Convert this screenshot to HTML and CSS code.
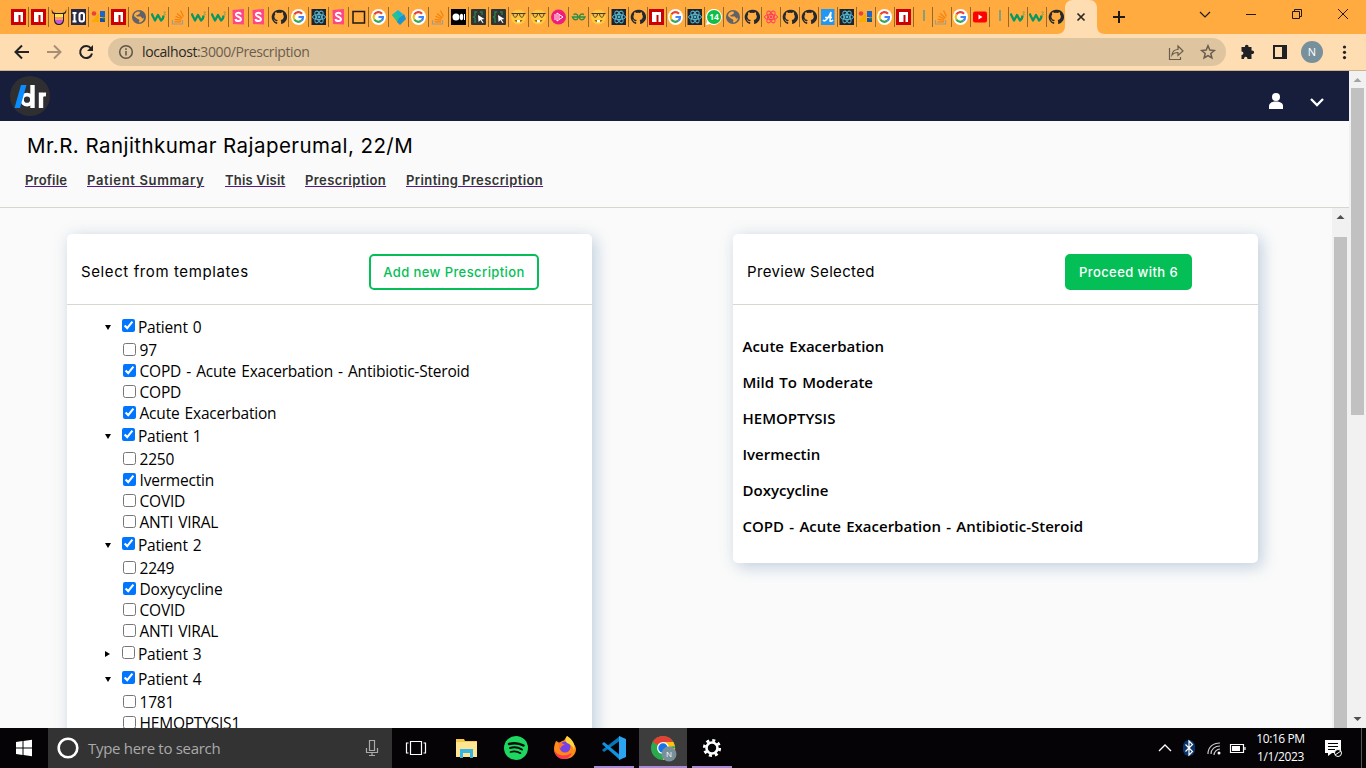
FILE: index.html
```
<!DOCTYPE html>
<html lang="en">
<head>
<meta charset="utf-8">
<title>Prescription</title>
<link rel="stylesheet" href="styles.css">
</head>
<body>
<svg class="defs" width="0" height="0">
  <symbol id="npm" viewBox="0 0 16 16"><path fill="#cb0000" d="M0 0h15v16H0z"/><path fill="#fff" d="M3 3h9v10H9.500V6H7.500v7H3z"/></symbol>
  <symbol id="devil" viewBox="0 0 16 16"><path fill="#222" d="M1 0c0 3 2 4 4 4h6c2 0 4-1 4-4 1 4-1 5-2 5v6c0 3-2 5-5 5s-5-2-5-5V5C2 5 0 4 1 0z"/><path fill="#ffe14d" d="M4 5h8v4H4z"/><path fill="#ff9860" d="M4 8h8v3H4z"/><path fill="#c85ad8" d="M4 11h8c0 2-2 4-4 4s-4-2-4-4z"/></symbol>
  <symbol id="io" viewBox="0 0 16 16"><rect width="15" height="16" fill="#292944"/><path fill="none" stroke="#fff" stroke-width="2" d="M1.500 4h4M3.500 4v9M1.500 12.500h4"/><rect x="8.500" y="4" width="4.500" height="8.500" rx="2" fill="none" stroke="#fff" stroke-width="2"/></symbol>
  <symbol id="dev" viewBox="0 0 16 16"><circle cx="3" cy="4.500" r="2.300" fill="#ea4335"/><path fill="#f9ab00" d="M0 13 8 4v9z"/><path fill="#1a66d0" d="M9 2h5v6H9z"/><path fill="#174ea6" d="M9 9h2l3 2v2H9z"/><path fill="#188038" d="M11 8.500h3V12z"/></symbol>
  <symbol id="globe" viewBox="0 0 16 16"><circle cx="8" cy="8" r="7" fill="#5f6368"/><path fill="#ffab40" d="M7 2.500c3 0 2 2 1 2.500-1 .5-1 1-2 1s-1 1 0 1.500h3c2 0 1 2 3 2l1-1c0 3-3 5-5 5 0-2 1-2 0-3l-2-1-3-2.500C3 4 5 3 7 2.500z"/></symbol>
  <symbol id="w3" viewBox="0 0 16 16"><path fill="none" stroke="#059862" stroke-width="2.300" stroke-linejoin="round" d="M.5 4.500 4 11.500 7 6l3 5.500c1.500-1 2.500-2.500 2.500-5"/><path fill="none" stroke="#7a9a4e" stroke-width=".8" d="M12.500 3h2l-1 1.500 1 1-2 .7"/></symbol>
  <symbol id="so" viewBox="0 0 16 16"><path fill="none" stroke="#a09c8c" stroke-width="1.200" d="M1.500 11v4h10v-4"/><path fill="none" stroke="#f4800d" stroke-width="1.200" d="M3.500 12.800h6.500M3.700 10.300l6.500.9M4.500 7.300l6 2.500M6 4.500l5.500 4.500M9.500 1.500l3 6"/></symbol>
  <symbol id="sb" viewBox="0 0 16 16"><path fill="#ff4785" d="m1.500 1 11.500-1v15.500l-11-.5z"/><path fill="none" stroke="#fff" stroke-width="2" d="M10 5.500C9 3 4.500 3.500 5 6c.5 2 5 1.500 5 4 0 2.500-5 3-5.500 0"/></symbol>
  <symbol id="gh" viewBox="0 0 16 16"><path fill="#24292f" d="M8 .7a7.300 7.300 0 0 0-2.400 14.200c.4 0 .6-.2.6-.4v-1.400c-2 .5-2.500-1-2.500-1-.3-.8-.8-1-.8-1-.7-.5 0-.5 0-.5.8 0 1.200.8 1.200.8.7 1.200 1.800.8 2.200.6 0-.5.200-.8.500-1C5 10.700 3.400 10 3.400 7.400c0-.8.300-1.400.8-2-.1-.3-.4-1.100.1-2 0 0 .6-.3 2 .7a7 7 0 0 1 3.600 0c1.400-1 2-.7 2-.7.4.9.1 1.700.1 2 .5.600.8 1.200.8 2 0 2.600-1.700 3.300-3.200 3.500.3.300.5.800.5 1.500v2.200c0 .2.200.5.600.4A7.300 7.300 0 0 0 8 .7z"/></symbol>
  <symbol id="goog" viewBox="0 0 16 16"><ellipse cx="7.500" cy="8" rx="7.500" ry="8" fill="#fff"/><g fill="none" stroke-width="2.200" transform="translate(-.7)"><path stroke="#ea4335" d="M4 5.500a4.700 4.700 0 0 1 7.700-.8"/><path stroke="#fbbc05" d="M4 5.500a5 5 0 0 0 0 5"/><path stroke="#34a853" d="M4 10.500a4.700 4.700 0 0 0 7 1.200"/><path stroke="#4285f4" d="M11 11.700c1.300-1 1.800-2.200 1.700-3.700H8.200"/></g></symbol>
  <symbol id="atom" viewBox="0 0 16 16"><g fill="none" stroke="currentColor"><ellipse cx="8" cy="8" rx="6.500" ry="2.600"/><ellipse cx="8" cy="8" rx="6.500" ry="2.600" transform="rotate(60 8 8)"/><ellipse cx="8" cy="8" rx="6.500" ry="2.600" transform="rotate(120 8 8)"/></g><circle cx="8" cy="8" r="1.400" fill="currentColor"/></symbol>
  <symbol id="react" viewBox="0 0 16 16"><rect x=".5" width="14.500" height="16" fill="#20232a"/><use href="#atom" color="#53b9d4"/></symbol>
  <symbol id="preact" viewBox="0 0 16 16"><use href="#atom" color="#ff3e5e"/></symbol>
  <symbol id="sq" viewBox="0 0 16 16"><path fill="none" stroke="#1d1a16" stroke-width="1.500" d="M2 2.500h11.500v11.500H2z"/></symbol>
  <symbol id="teal" viewBox="0 0 16 16"><path fill="#12b6d8" d="m1 6 6-5 5 4-5 6z"/><path fill="#22c58b" d="m1 6 4-3 6 8-4 3z"/><path fill="#1794d1" d="m8 9 5-4 2 5-6 6-3-3z"/></symbol>
  <symbol id="med" viewBox="0 0 16 16"><path d="M0 0h15v16H0z"/><circle cx="5" cy="8" r="3.500" fill="#fff"/><ellipse cx="10.500" cy="8" rx="1.700" ry="3.300" fill="#fff"/><path stroke="#fff" d="M13.500 5v6"/></symbol>
  <symbol id="cur" viewBox="0 0 16 16"><rect width="15" height="16" rx="1" fill="#333"/><path fill="none" stroke="#278449" stroke-width="1.300" d="M6 3H4v4L2.500 8 4 9v4h1M9 3h2v3"/><path fill="#fff" d="m7 6 6.500 4-3 .5 2 3-1 .5-2-3-2 2z"/></symbol>
  <symbol id="nerd" viewBox="0 0 16 16"><circle cx="7.500" cy="8" r="7.500" fill="#ffc83d"/><path fill="none" stroke="#3d3427" d="M.5 4.500h14"/><path fill="#f3b94a" stroke="#3d3427" stroke-width=".9" d="M2 4.500h4.500c0 5-4.500 5-4.500 0zM8.500 4.500H13c0 5-4.500 5-4.500 0z"/><path fill="#9b6518" d="M3.500 11h8c-1 3-7 3-8 0z"/><path fill="#fff" d="M6 11h3v2.500H6z"/></symbol>
  <symbol id="pink" viewBox="0 0 16 16"><circle cx="7.500" cy="8" r="7.500" fill="#f01e7a"/><path fill="none" stroke="#fff" d="M4 5v6M6 4v8l6-4zM8 6v4"/></symbol>
  <symbol id="gfg" viewBox="0 0 16 16"><path fill="none" stroke="#2f8d46" stroke-width="1.400" d="M2.500 5.500C5.500 4 7.200 6 7 8.500 6.500 11.500 3 11.800 1.500 8h12.500c-1.500 3.800-5 3.500-5.500.5C8.300 6 10 4 13 5.500"/></symbol>
  <symbol id="wa" viewBox="0 0 16 16"><path fill="#fff" d="M8 0a8 8 0 1 1-4 15l-4 1 1-4A8 8 0 0 1 8 0z"/><circle cx="8" cy="8" r="7" fill="#0cbf46"/></symbol>
  <symbol id="aa" viewBox="0 0 16 16"><path fill="#2196f3" d="M1 0h13.500v16H1z"/><path fill="none" stroke="#fff" stroke-width="1.500" d="M3 11c2 3 6-3 8-8l-1 9c1 1 2 0 3-1M5 8.500h7"/></symbol>
  <symbol id="tick" viewBox="0 0 16 16"><path stroke="#6a9c84" stroke-width="1.600" d="M9 1v11"/></symbol>
  <symbol id="yt" viewBox="0 0 16 16"><rect x="1" y="2.500" width="14" height="11" rx="2" fill="#f00"/><path fill="#fff" d="m6.500 5.500 4 2.500-4 2.500z"/></symbol>
</svg>

<header class="tabstrip">
  <div class="tabs">
    <i><svg><use href="#npm"/></svg></i><i><svg><use href="#npm"/></svg></i><i><svg><use href="#devil"/></svg></i><i><svg><use href="#io"/></svg></i><i><svg><use href="#dev"/></svg></i><i><svg><use href="#npm"/></svg></i><i><svg><use href="#globe"/></svg></i><i><svg><use href="#w3"/></svg></i><i><svg><use href="#so"/></svg></i><i><svg><use href="#w3"/></svg></i><i><svg><use href="#w3"/></svg></i><i><svg><use href="#sb"/></svg></i><i><svg><use href="#sb"/></svg></i><i><svg><use href="#gh"/></svg></i><i><svg><use href="#goog"/></svg></i><i><svg><use href="#react"/></svg></i><i><svg><use href="#sb"/></svg></i><i><svg><use href="#sq"/></svg></i><i><svg><use href="#goog"/></svg></i><i><svg><use href="#teal"/></svg></i><i><svg><use href="#goog"/></svg></i><i><svg><use href="#so"/></svg></i><i><svg><use href="#med"/></svg></i><i><svg><use href="#cur"/></svg></i><i><svg><use href="#cur"/></svg></i><i><svg><use href="#nerd"/></svg></i><i><svg><use href="#nerd"/></svg></i><i><svg><use href="#pink"/></svg></i><i><svg><use href="#gfg"/></svg></i><i><svg><use href="#nerd"/></svg></i><i><svg><use href="#react"/></svg></i>
  </div>
  <div class="tabs narrow">
    <i><svg><use href="#gh"/></svg></i><i><svg><use href="#npm"/></svg></i><i><svg><use href="#goog"/></svg></i><i><svg><use href="#react"/></svg></i><i><svg><use href="#wa"/><text x="8" y="11" text-anchor="middle" font-size="8.500" font-weight="700" fill="#fff">14</text></svg></i><i><svg><use href="#globe"/></svg></i><i><svg><use href="#gh"/></svg></i><i><svg><use href="#preact"/></svg></i><i><svg><use href="#gh"/></svg></i><i><svg><use href="#gh"/></svg></i><i><svg><use href="#aa"/></svg></i><i><svg><use href="#react"/></svg></i><i><svg><use href="#dev"/></svg></i><i><svg><use href="#goog"/></svg></i><i><svg><use href="#npm"/></svg></i><i><svg><use href="#tick"/></svg></i><i><svg><use href="#so"/></svg></i><i><svg><use href="#goog"/></svg></i><i><svg><use href="#yt"/></svg></i><i><svg><use href="#tick"/></svg></i><i><svg><use href="#w3"/></svg></i><i><svg><use href="#w3"/></svg></i><i class="last"><svg><use href="#gh"/></svg></i>
  </div>
  <svg class="active-tab" width="48" height="34"><path fill="#ffddb3" d="M0 34c5 0 8-3 8-8V8c0-5 3-8 8-8h16c5 0 8 3 8 8v18c0 5 3 8 8 8z"/><path stroke="#2b2723" stroke-width="1.700" d="m20.500 13.500 7 7m0-7-7 7"/></svg>
  <svg class="window-controls" width="261" height="34" fill="none" stroke="#1f1a12"><path stroke-width="2" d="M8 17h12M14 11v12"/><path stroke-width="1.200" d="m95 12 5 5 5-5"/><path d="M141 14.500h10M187.500 11.500h7v7h-7zM189.500 11v-1.500h7v7H195"/><path d="m233 9 10 10m0-10-10 10"/></svg>
</header>

<nav class="toolbar">
  <svg width="100" height="36" fill="none" stroke-width="2"><path stroke="#202124" d="M29 18H16m6-6.500L15.500 18l6.500 6.500"/><path stroke="#a78f75" d="M47 18h13m-6-6.500 6.500 6.500-6.500 6.500"/><path stroke="#202124" d="M91 14.500a6 6 0 1 0 1 5"/><path fill="#202124" d="M93 11v6h-6z"/></svg>
  <div class="address">
    <svg width="16" height="16" fill="none" stroke="#5c5449" stroke-width="1.500"><circle cx="8" cy="8" r="6.300"/><path d="M8 7v4.500M8 4.300V6"/></svg>
    <span class="url"><b>localhost</b>:3000/Prescription</span>
    <svg class="share" width="50" height="20" fill="none" stroke="#695d4e" stroke-width="1.200"><path d="M2.500 6v11.500h11V15M5 13c.5-4 3-5.500 6-5.500V4l5 5-5 4.500v-3c-3 0-4.500.5-6 2.500z"/><path stroke-width="1.500" d="m41 3.800 1.800 4.300 4.500.4-3.500 3 1.100 4.500-3.900-2.400-3.900 2.400 1.100-4.500-3.500-3 4.500-.4z"/></svg>
  </div>
  <svg class="actions" width="140" height="36"><path fill="#202124" d="M15.500 13h3.500c-.5-3 4-3 3.500 0h3v3.500c3.500-.5 3.500 4 0 3.500v5h-4c0-3-3.500-3-3.500 0h-2.500v-4c2.500 0 2.500-3.500 0-3.500z"/><path fill="none" stroke="#202124" stroke-width="2" d="M48 12h12v12H48z"/><path fill="#202124" d="M56 12h4v12h-4z"/><circle cx="86" cy="18" r="11" fill="#78909c"/><text x="86" y="22" text-anchor="middle" font-size="11" fill="#fff">N</text><g fill="#202124"><circle cx="118.500" cy="13" r="1.600"/><circle cx="118.500" cy="18.300" r="1.600"/><circle cx="118.500" cy="23.600" r="1.600"/></g></svg>
</nav>

<div class="viewport">
  <div class="page">
    <header class="appbar">
      <svg width="40" height="40"><ellipse cx="20" cy="20" rx="20" ry="20" fill="#2f2f31"/><g fill="none" stroke="#fff"><circle cx="17" cy="23.700" r="5" stroke-width="3.800"/><path stroke-width="4.400" d="M22.500 9v23M31 16.500V32"/><path stroke-width="3.800" d="M31 22c0-3 1.500-3.700 5-3.500"/></g><path fill="#0a8cff" d="M11 9h5.500L10 32H4.500z"/></svg>
      <svg class="user" width="70" height="30"><circle cx="13" cy="11" r="4" fill="#fff"/><path fill="#fff" d="M6 23v-3c0-3 3-4.500 7-4.500s7 1.500 7 4.500v3z"/><path fill="none" stroke="#fff" stroke-width="2.300" d="m48 13 6 6 6-6"/></svg>
    </header>
    <section class="patient">
      <h1>Mr.R. Ranjithkumar Rajaperumal, 22/M</h1>
      <div class="links"><a class="l1">Profile</a><a class="l2">Patient Summary</a><a class="l3">This Visit</a><a class="l4">Prescription</a><a class="l5">Printing Prescription</a></div>
    </section>
    <div class="scroller">
      <main class="cards">
        <section class="card templates">
          <div class="card-head"><h2 class="t1">Select from templates</h2><button class="outline">Add new Prescription</button></div>
          <div class="tree">
            <div class="parent"><em class="open"></em><input type="checkbox" checked><span>Patient 0</span></div>
            <label><input type="checkbox"><span>97</span></label>
            <label><input type="checkbox" checked><span>COPD - Acute Exacerbation - Antibiotic-Steroid</span></label>
            <label><input type="checkbox"><span>COPD</span></label>
            <label><input type="checkbox" checked><span>Acute Exacerbation</span></label>
            <div class="parent"><em class="open"></em><input type="checkbox" checked><span>Patient 1</span></div>
            <label><input type="checkbox"><span>2250</span></label>
            <label><input type="checkbox" checked><span>Ivermectin</span></label>
            <label><input type="checkbox"><span>COVID</span></label>
            <label><input type="checkbox"><span>ANTI VIRAL</span></label>
            <div class="parent"><em class="open"></em><input type="checkbox" checked><span>Patient 2</span></div>
            <label><input type="checkbox"><span>2249</span></label>
            <label><input type="checkbox" checked><span>Doxycycline</span></label>
            <label><input type="checkbox"><span>COVID</span></label>
            <label><input type="checkbox"><span>ANTI VIRAL</span></label>
            <div class="parent"><em></em><input type="checkbox"><span>Patient 3</span></div>
            <div class="parent"><em class="open"></em><input type="checkbox" checked><span>Patient 4</span></div>
            <label><input type="checkbox"><span>1781</span></label>
            <label><input type="checkbox"><span>HEMOPTYSIS1</span></label>
          </div>
        </section>
        <section class="card">
          <div class="card-head"><h2 class="t2">Preview Selected</h2><button class="solid">Proceed with 6</button></div>
          <ul class="preview">
            <li>Acute Exacerbation</li><li>Mild To Moderate</li><li>HEMOPTYSIS</li><li>Ivermectin</li><li>Doxycycline</li><li>COPD - Acute Exacerbation - Antibiotic-Steroid</li>
          </ul>
        </section>
      </main>
      <div class="bar inner"><svg width="17" height="17"><path fill="#505050" d="m4.500 11 4-4 4 4z"/></svg><div class="thumb"></div></div>
    </div>
  </div>
  <div class="bar outer"><svg width="17" height="17"><path fill="#a3a3a3" d="m4.500 11 4-4 4 4z"/></svg><div class="thumb"></div><svg width="17" height="17"><path fill="#505050" d="m4.500 6 4 4 4-4z"/></svg></div>
</div>

<footer class="taskbar">
  <svg width="48" height="40"><path fill="#fff" d="m16 14 6.500-1v6.500H16zM23.500 13l8.500-1.200v7.700h-8.500zM16 20.500h6.500V27L16 26zM23.500 20.500H32v7.700L23.500 27z"/></svg>
  <div class="search">
    <svg width="22" height="22"><circle cx="11" cy="11" r="9.300" fill="none" stroke="#fff" stroke-width="2.600"/></svg>
    <span>Type here to search</span>
    <svg width="16" height="20" fill="none" stroke="#aaa" stroke-width="1.200"><path d="M5.500 2.500h5v10h-5zM2.500 10v4.500h11V10M8 14.500v3M5 17.500h6"/></svg>
  </div>
  <svg class="apps" width="348" height="40">
    <g fill="none" stroke="#fff" stroke-width="1.200"><path d="M18.500 13.500h11v13h-11zM16.500 15h-2v10h2M31.500 15h2v10h-2"/></g>
    <path fill="#f5c84c" d="M64 11h8l1 2h12v3H64z"/><path fill="#ffe590" d="M64 14h21v15H64z"/><path fill="#39b3e6" d="M68 21h13v9h-3v-5h-7v5h-3z"/>
    <circle cx="124" cy="20" r="12" fill="#1ed760"/><g fill="none" stroke="#090909" stroke-linecap="round"><path stroke-width="2.500" d="M117 16c5-1.500 10-1 14.500 1.500"/><path stroke-width="2" d="M118 20c4-1.200 8-.8 12 1.500"/><path stroke-width="1.700" d="M118.500 24c3.500-1 7-.5 10 1.200"/></g>
    <path fill="#ff8a16" d="M164 13c1 0 2 1 3 2l3-2c2 0 3-2 5-5 2 2 3 3 4 6 2 1 5 4 5 7 0 6-5 10-11 10s-11-4-11-10c0-3 1-6 2-8z"/><path fill="#ff3750" d="M162 20c1 7 9 10 18 5-2 4-5 6-9 6-5 0-9-5-9-11z"/><circle cx="173" cy="19" r="5.500" fill="#7542e5"/><path fill="#ffd83d" d="M175 8c5 3 9 8 7 14-1-4-4-6-7-7-2-2-2-4 0-7z"/><path fill="#ff7139" d="M166 15c2-1 4 0 7 2-3 0-4 2-5 4z"/>
    <path fill="#0877b9" d="m228 8-18 14 2 2 17-12z"/><path fill="#1094df" d="m210 16 2-2 17 14-1 4z"/><path fill="#2ba5ef" d="m227 8 7 3v18l-7 3z"/>
    <rect x="247" width="48" height="40" fill="#3d3d3e"/>
    <circle cx="271" cy="20" r="12" fill="#2ca94f"/><path fill="#e44134" d="M271 20 260.600 14a12 12 0 0 1 20.800 0z"/><path fill="#fbc116" d="M271 20h12a12 12 0 0 0-1.600-6H271zM271 20l12-2a12 12 0 0 1-12 14z"/><circle cx="271" cy="20" r="6" fill="#fff"/><circle cx="271" cy="20" r="4.700" fill="#1a73e8"/><circle cx="277" cy="26" r="7.500" fill="#78909c"/><text x="277" y="29" text-anchor="middle" font-size="8" fill="#fff">N</text>
    <circle cx="320" cy="20" r="5.500" fill="none" stroke="#fff" stroke-width="2.600"/><circle cx="320" cy="20" r="7.700" fill="none" stroke="#fff" stroke-width="2.800" stroke-dasharray="3 3.050"/>
    <path fill="#a98ad8" d="M202 38h40v2h-40zM247 38h48v2h-48zM300 38h40v2h-40z"/>
  </svg>
  <svg class="tray" width="100" height="40" fill="none" stroke="#fff"><path stroke-width="1.300" d="m9 23 6-6 6 6"/><rect x="33" y="12" width="12" height="16" rx="6" fill="#09336b" stroke="none"/><path stroke-width="1.200" d="m35.500 16.500 7 7L39 27V13l3.500 3.500-7 7"/><g stroke="#ccc" stroke-width="1.200"><path d="M58 26c0-7 5-11 12-11M61 26c0-5 4-8 9-8M64 27c0-3 3-6 6-6"/></g><circle cx="69" cy="25" r="1.500" fill="#fff" stroke="none"/><path stroke-width="1.200" d="M80.500 16.500h13v8h-13zM95 19v3"/><path fill="#fff" stroke="none" d="M82 18h8v5h-8z"/></svg>
  <div class="clock"><span>10:16 PM</span><span>1/1/2023</span></div>
  <svg class="note" width="56" height="40"><path fill="#fff" d="M15 12h16v13h-9l-4 3v-3h-3z"/><path fill="none" stroke="#000" stroke-width="1.200" d="M18 15.500h10M18 18.500h10M18 21.500h7"/><circle cx="28" cy="25" r="3.500" fill="#000" stroke="#fff"/><path stroke="#fff" d="m25 27 6-4"/><path stroke="#555" d="M51.500 0v40"/></svg>
</footer>
</body>
</html>
```
FILE: styles.css
```
* { box-sizing: border-box; }
body { margin: 0; width: 1366px; height: 768px; overflow: hidden; display: flex; flex-direction: column; font-family: "Open Sans", "Noto Sans", sans-serif; color: #000; }
svg { display: block; flex: none; }
.defs { position: absolute; }

.tabstrip { height: 34px; flex: none; display: flex; background: #ffab40; padding-left: 9px; }
.tabs { display: flex; padding-top: 7px; flex: none; }
.tabs i { width: 20px; height: 20px; border-right: 1px solid #94692e; display: flex; align-items: center; font-style: normal; }
.tabs svg { width: 16px; height: 16px; margin-left: 2px; }
.tabs.narrow i { width: 19px; }
.narrow svg { margin-left: 1px; }
.tabs .last { border: 0; }
.active-tab { margin-left: -9px; }

.toolbar { height: 37px; flex: none; display: flex; background: #ffddb3; border-bottom: 1px solid #cfb38f; }
.address { width: 1118px; height: 28px; margin: 4px 0 0 8px; padding: 0 9px 0 10px; border-radius: 14px; background: #dfc4a0; display: flex; align-items: center; }
.url { flex: 1; margin: -1px 0 0 8px; font-size: 14px; letter-spacing: -0.4px; color: #6b5d4c; }
.url b { font-weight: 400; color: #2b2723; }

.viewport { flex: 1; min-height: 0; display: flex; }
.page { width: 1349px; display: flex; flex-direction: column; background: #fafafa; }
.appbar { height: 50px; flex: none; padding: 0 16px 0 10px; display: flex; align-items: center; justify-content: space-between; background: #171e3b; }
.user { margin-top: 10px; }
.patient { height: 87px; flex: none; border-bottom: 1px solid #d6d8d0; padding: 10px 25px 0; font-family: Inter, sans-serif; }
h1 { margin: 0 0 0 2px; font-size: 20.500px; line-height: 30px; font-weight: 400; letter-spacing: 0.45px; white-space: nowrap; }
.links { display: flex; gap: 20px; margin-top: 9px; font-size: 13px; line-height: 20px; font-weight: 600; color: #333; white-space: nowrap; }
.links a { text-decoration: underline #551a8b; }
.l1 { width: 42px; letter-spacing: 0.2px; }
.l2 { width: 118px; letter-spacing: 0.65px; }
.l3 { width: 60px; letter-spacing: 0.2px; }
.l4 { width: 81px; letter-spacing: 0.4px; }
.l5 { letter-spacing: 0.4px; }

.scroller { flex: 1; min-height: 0; display: flex; overflow: hidden; }
.cards { width: 1332px; padding: 26px 0 0 67px; display: flex; gap: 141px; align-items: flex-start; overflow: hidden; }
.card { width: 525px; flex: none; height: 329px; background: #fff; border-radius: 5px; box-shadow: 5px 5px 15px rgba(60, 110, 160, .22), 0 0 16px rgba(90, 130, 165, .12); }
.templates { height: 600px; }
.card-head { height: 71px; border-bottom: 1px solid #d6d7cf; display: flex; align-items: flex-start; padding: 20px 0 0 14px; }
h2 { width: 288px; margin: 0; font: 400 15px/36px Inter, sans-serif; }
.t1 { letter-spacing: 0.6px; }
.t2 { width: 318px; letter-spacing: 0.33px; }
button { height: 36px; padding: 0; border: 2px solid #04bf56; border-radius: 5px; font: 500 13px/1 Inter, sans-serif; letter-spacing: 0.42px; background: #fff; color: #04bf56; white-space: nowrap; }
.outline { width: 170px; }
.solid { width: 127px; background: #04bf56; color: #fff; }
.tree { padding: 10px 0 0 38px; font-size: 15.500px; letter-spacing: -0.2px; word-spacing: 1.300px; white-space: nowrap; }
.tree label, .parent { height: 21px; display: flex; align-items: center; padding-left: 18px; }
.parent { height: 25px; padding: 0; }
.tree input { width: 13px; height: 13px; margin: 0 3.500px 2px 0; flex: none; }
.tree span { margin-bottom: 2px; }
.parent input { margin: 0 3px 4px 0; }
.tree em { width: 17px; flex: none; }
.tree em::before { content: ""; display: block; border: solid transparent; border-width: 3px 0 3px 5px; border-left-color: #000; width: 0; margin: 0 0 1px 0; }
.tree em.open::before { border-width: 5px 3px 0; border-color: #000 transparent; margin: 0; }
.preview { list-style: none; margin: 0; padding: 23px 0 0 9.500px; font-size: 15px; font-weight: 600; word-spacing: 1.400px; }
.preview li { height: 36px; line-height: 36px; white-space: nowrap; }

.bar { width: 17px; flex: none; background: #f1f1f1; display: flex; flex-direction: column; }
.thumb { width: 13px; margin-left: 2px; background: #c1c1c1; }
.inner .thumb { margin-top: 12px; flex: 1; }
.outer .thumb { height: 327px; margin-bottom: auto; }

.taskbar { height: 40px; flex: none; background: #050306; display: flex; color: #fff; }
.search { width: 344px; flex: none; background: #333; display: flex; align-items: center; padding: 0 12px 0 9px; color: #aaa; font-size: 15px; }
.search span { flex: 1; margin-left: 9px; letter-spacing: -0.3px; }
.tray { margin-left: 410px; }
.clock { width: 60px; flex: none; padding: 2px 0 0 1px; display: flex; flex-direction: column; align-items: center; font-size: 12px; line-height: 18px; letter-spacing: -0.4px; white-space: nowrap; }
```
